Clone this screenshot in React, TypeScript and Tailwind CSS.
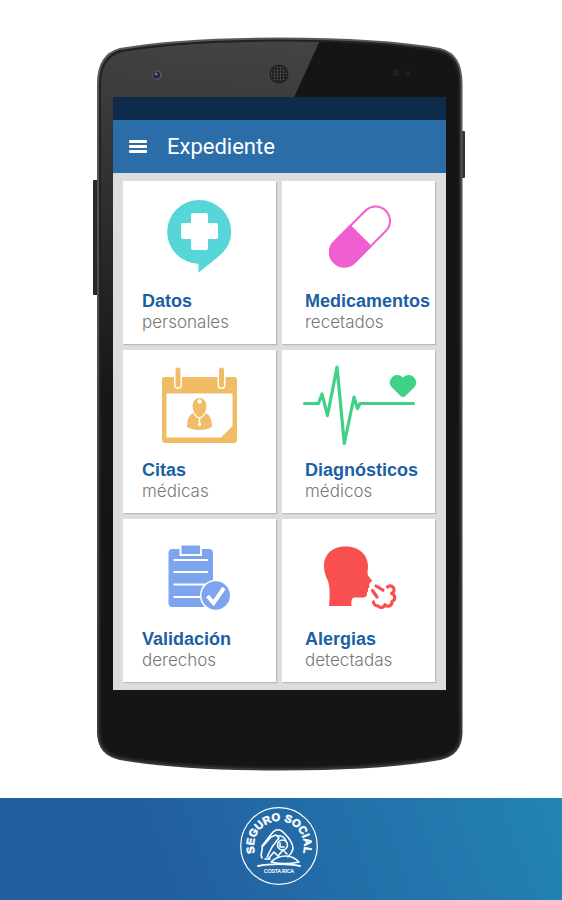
import type { ReactNode } from "react";

type Tile = {
  id: string;
  title: string;
  detail: string;
  art: ReactNode;
};

const tiles: Tile[] = [
  {
    id: "datos",
    title: "Datos",
    detail: "personales",
    art: (
      <>
        <path
          d="M76.500 19a31.700 31.700 0 0 1 31.700 31.700c0 11-5.500 19-13 25L75.500 91.700v-9A31.700 31.700 0 0 1 76.500 19Z"
          fill="#56d6d8"
        />
        <path
          d="M70 32h13q2 0 2 2v8h8q2 0 2 2v12q0 2-2 2h-8v9q0 2-2 2H70q-2 0-2-2v-9h-8q-2 0-2-2V44q0-2 2-2h8v-8q0-2 2-2Z"
          fill="#fff"
        />
      </>
    ),
  },
  {
    id: "medicamentos",
    title: "Medicamentos",
    detail: "recetados",
    art: (
      <g transform="rotate(45 78 55.500)">
        <rect x="63.600" y="19" width="28.800" height="73" rx="14.400" fill="#fff" stroke="#ef5fd0" strokeWidth="2" />
        <path d="M62.600 54h30.800v23.600a15.400 15.400 0 0 1-30.800 0Z" fill="#ef5fd0" />
      </g>
    ),
  },
  {
    id: "citas",
    title: "Citas",
    detail: "médicas",
    art: (
      <>
        <rect x="39" y="27" width="75" height="66" rx="3" fill="#f0bd66" />
        <path d="M43.500 43.500h66V76L98 87.500H43.500Z" fill="#fff" />
        <g strokeLinecap="round">
          <path d="M55 21v14M98.500 21v14" stroke="#fff" strokeWidth="8" />
          <path d="M55 20v15M98.500 20v15" stroke="#f0bd66" strokeWidth="5" />
        </g>
        <path d="M64 77c0-9 3-13 8-15l4.500 4 4.500-4c5 2 8 6 8 15-7 4-18 4-25 0Z" fill="#f0bd66" />
        <path
          d="M69 56c0-5 3-8.500 7.500-8.500S84 51 84 56c0 5-3 11-7.500 12-4.500-1-7.500-7-7.500-12Z"
          fill="#f0bd66"
          stroke="#fff"
          strokeWidth="1.200"
        />
        <circle cx="76.500" cy="51.500" r="2.200" fill="#fff" />
        <path d="M76.500 68v6" stroke="#fff" strokeWidth="1.500" />
        <circle cx="76.500" cy="74.500" r="1.700" fill="#fff" />
      </>
    ),
  },
  {
    id: "diagnosticos",
    title: "Diagnósticos",
    detail: "médicos",
    art: (
      <>
        <path
          d="M22.500 53.500H36.500L40 44l5.500 21.500L55 17l7.300 76.500L72 47l3.500 11.500 2.500-5h53.500"
          fill="none"
          stroke="#3fd184"
          strokeWidth="3.200"
          strokeLinecap="round"
          strokeLinejoin="round"
        />
        <path
          d="M121 47c-1.500 0-3-1.500-4-2.500l-7-7c-3-3-3-7 0-10 3-3.500 8-3 11 0 3-3 8-3.500 11 0 3 3 3 7 0 10l-7 7c-1 1-2.500 2.500-4 2.500Z"
          fill="#3fd184"
        />
      </>
    ),
  },
  {
    id: "validacion",
    title: "Validación",
    detail: "derechos",
    art: (
      <>
        <rect x="45.500" y="30" width="44.500" height="58" rx="4" fill="#7da4ee" />
        <path d="M57.500 25.500h20.500V36H57.500Z" fill="#7da4ee" stroke="#fff" strokeWidth="2" />
        <path d="M50.500 41H85M50.500 53H85M50.500 65.500H85M50.500 78H80" stroke="#fff" strokeWidth="2" />
        <circle cx="92.700" cy="76.500" r="15" fill="#7da4ee" stroke="#fff" strokeWidth="1.500" />
        <path d="m84.500 77 6 7 10.500-15" fill="none" stroke="#fff" strokeWidth="4" />
      </>
    ),
  },
  {
    id: "alergias",
    title: "Alergias",
    detail: "detectadas",
    art: (
      <>
        <path
          d="M47 87c1-10 1-18-1-25-2.500-5-4-10-4-15 0-12 9-19.500 21.500-19.500S86 35 86 47c0 4-1 7 0 9.500l4 5c.5 1-.5 1.500-2 2l-1 3c1 1 .5 2-1 3v1c1 2-1 2-1 3.500 0 3-1 4.500-4 4.500h-8c-3 0-4 2-3.500 8.500Z"
          fill="#f84f50"
        />
        <g fill="none" stroke="#f84f50" strokeWidth="3.200" strokeLinecap="round" strokeLinejoin="round">
          <path d="m94 67 7 4.200M90.500 71.500l4.500 6.500" />
          <path d="M105.500 68a3.900 3.900 0 1 1 4 6.500a4.200 4.200 0 0 1 .5 8a4 4 0 0 1-7 3.200a4 4 0 0 1-7 1.200a4 4 0 0 1-4.500-4" />
        </g>
      </>
    ),
  },
];

function DeviceBody() {
  return (
    <svg viewBox="93 37 376 734" className="absolute inset-0 h-full w-full" aria-hidden="true">
      <defs>
        <linearGradient id="rim" x1="0" x2="0" y1="0" y2="1">
          <stop offset="0" stopColor="#5a5a5a" />
          <stop offset="0.5" stopColor="#4a4a4a" />
          <stop offset="1" stopColor="#383838" />
        </linearGradient>
        <linearGradient id="shine" gradientUnits="userSpaceOnUse" x1="220" y1="40" x2="190" y2="410">
          <stop offset="0" stopColor="#434343" />
          <stop offset="1" stopColor="#161616" />
        </linearGradient>
        <clipPath id="glass">
          <path d="M101 84C101 66 108 56 122 52C162 45 220 41.500 280 41.500S398 45 438 52C452 56 458.500 66 458.500 84V732C458.500 746 452 753 438 756C398 763 340 766.500 280 766.500S162 763 122 756C108 753 101 746 101 732Z" />
        </clipPath>
        <pattern id="mesh" width="3" height="3" patternUnits="userSpaceOnUse">
          <rect width="3" height="3" fill="#1c1c1c" />
          <circle cx="1.500" cy="1.500" r="0.900" fill="#555" />
        </pattern>
      </defs>
      <rect x="93" y="180" width="6" height="115" rx="1" fill="#292929" />
      <rect x="460" y="131" width="5" height="47" rx="1" fill="#333" />
      <path
        d="M98 84C98 64 105 53 120 49C160 42 220 38.500 280 38.500S400 42 440 49C455 53 461.500 64 461.500 84V732C461.500 748 454 756 440 759C400 766 340 769.500 280 769.500S160 766 120 759C106 756 98 748 98 732Z"
        fill="#222"
        stroke="url(#rim)"
        strokeWidth="2"
      />
      <g clipPath="url(#glass)">
        <rect x="97" y="38" width="366" height="733" fill="#151515" />
        <path d="M97 38H321L97 530Z" fill="url(#shine)" />
      </g>
      <circle cx="157" cy="75" r="5" fill="#555" />
      <circle cx="156.500" cy="75" r="3.500" fill="#25243d" />
      <circle cx="156" cy="74" r="1.500" fill="#7774b8" />
      <circle cx="279" cy="74" r="9.500" fill="#202020" />
      <circle cx="279" cy="74" r="8" fill="url(#mesh)" />
      <circle cx="396" cy="73" r="3.500" fill="#202020" />
      <circle cx="408" cy="73" r="2.500" fill="#202020" />
    </svg>
  );
}

function AppBar() {
  return (
    <header className="flex h-[53px] items-center gap-5 bg-[#2b6da9] pl-4">
      <button type="button" aria-label="Abrir menú" className="flex w-[18px] flex-col gap-[2px]">
        <span className="h-[3px] w-full rounded-[1px] bg-white" />
        <span className="h-[3px] w-full rounded-[1px] bg-white" />
        <span className="h-[3px] w-full rounded-[1px] bg-white" />
      </button>
      <h1 className="font-['Roboto',sans-serif] text-[22px] leading-7 text-white">Expediente</h1>
    </header>
  );
}

function TileCard({ tile }: { tile: Tile }) {
  return (
    <a
      href={`#${tile.id}`}
      className="group block h-[163px] bg-white shadow-[1px_1px_1px_rgba(0,0,0,0.16)]"
    >
      <svg viewBox="0 0 153 110" className="h-[110px] w-full" aria-hidden="true">
        {tile.art}
      </svg>
      <div className="pl-[19px] leading-[21px] group-even:pl-[23px]">
        <h2 className="font-['Liberation_Sans',sans-serif] text-[18px] font-bold text-[#1b5fa4]">{tile.title}</h2>
        <p className="font-['Inter','Liberation_Sans',sans-serif] text-[17px] font-light text-[#777]">{tile.detail}</p>
      </div>
    </a>
  );
}

function Seal() {
  return (
    <svg viewBox="0 0 80 80" className="h-20 w-20" role="img" aria-label="Seguro Social Costa Rica">
      <defs>
        <path id="sealArc" d="M20.800 56A25 25 0 1 1 59.200 56" />
      </defs>
      <circle cx="40" cy="40" r="38.300" fill="none" stroke="#fff" strokeWidth="1.200" />
      <text
        className="font-['Liberation_Sans',sans-serif] text-[11px] font-bold"
        fill="#fff"
        stroke="#fff"
        strokeWidth="0.500"
        textAnchor="middle"
      >
        <textPath href="#sealArc" startOffset="50%">
          SEGURO SOCIAL
        </textPath>
      </text>
      <g fill="none" stroke="#fff" strokeWidth="1.600" strokeLinecap="round" strokeLinejoin="round">
        <path d="M19 60c12-2.500 30-2.500 42 0" strokeWidth="1.800" />
        <path d="M23 52c-3-4 2-8 0-12l11-14c5-4 9-2 12 2 5 5 8 9 8 15-1 4-3 6-5 8" />
        <path d="M24 40l8-9 5-2 3 3-7 9-5 10M38 30c5-1 8 2 9 5" />
        <circle cx="43.500" cy="39" r="5" />
        <path d="M41 37v4h4M32 56c4-4 9-6 15-6 5 0 9 2 13 6-9 2-19 2-28 0ZM29 53l6-7 4 4 5-6 4 4M26 53h5" />
      </g>
      <text
        x="40"
        y="67"
        className="font-['Liberation_Sans',sans-serif] text-[5px]"
        fill="#fff"
        stroke="#fff"
        strokeWidth="0.200"
        textAnchor="middle"
      >
        COSTA RICA
      </text>
    </svg>
  );
}

export default function App() {
  return (
    <div className="flex min-h-screen flex-col bg-white">
      <main className="flex grow justify-center pt-[37px] pb-[27px]">
        <div className="relative w-[376px] pt-[60px] pr-[23px] pb-[80px] pl-5">
          <DeviceBody />
          <div className="relative bg-[#dcdddf]">
            <div className="h-[23px] bg-[#0e2b4b]" />
            <AppBar />
            <nav aria-label="Expediente" className="grid grid-cols-2 gap-[6px] py-2 pr-[11px] pl-[10px]">
              {tiles.map((tile) => (
                <TileCard key={tile.id} tile={tile} />
              ))}
            </nav>
          </div>
        </div>
      </main>
      <footer className="flex h-[102px] justify-center bg-linear-[70deg] from-[#235f9f] from-30% to-[#2284b5] pt-2 pr-1">
        <Seal />
      </footer>
    </div>
  );
}
